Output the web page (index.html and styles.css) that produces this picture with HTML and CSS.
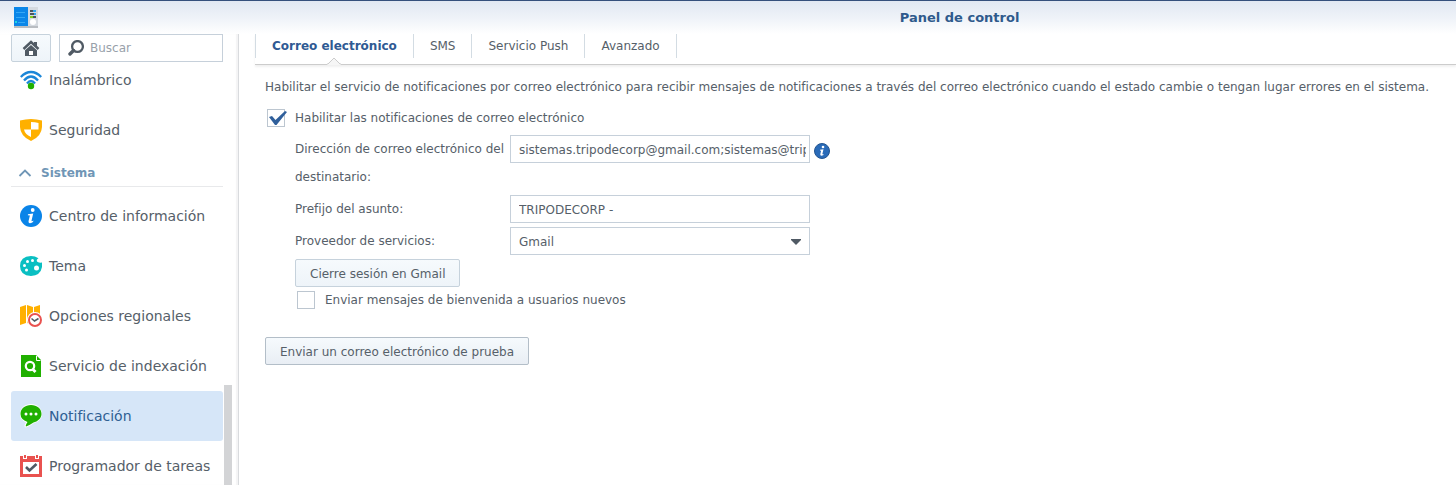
FILE: index.html
```html
<!DOCTYPE html>
<html lang="es">
<head>
<meta charset="utf-8">
<title>Panel de control</title>
<link rel="stylesheet" href="styles.css">
</head>
<body>
<header class="titlebar">
  <svg class="app-icon" width="24" height="22" viewBox="0 0 24 22" aria-hidden="true">
    <rect x="0" y="19" width="24" height="2" fill="#b9bdc2"/>
    <rect x="14" y="0" width="10" height="19" fill="#d5dae0"/>
    <rect x="0" y="0" width="14" height="19" fill="#0a86e8"/>
    <path d="M2 5.500h9M2 10.500h9M4 15.500h7" stroke="#35a8f5" stroke-width="1" fill="none"/>
    <path d="M1 15h2" stroke="#1fd6e0" stroke-width="2"/>
    <path d="M16 4h3M16 7h4M18 10h4" stroke="#4a5560" stroke-width="2"/>
    <path d="M19 4h3M20 7h2" stroke="#2fa5ee" stroke-width="2"/>
    <path d="M16 10h3" stroke="#7fcf1c" stroke-width="2"/>
    <circle cx="19" cy="15" r="3" fill="#fff"/>
  </svg>
  <h1 class="window-title">Panel de control</h1>
</header>
<div class="window-body">
  <aside class="sidebar">
    <div class="toolbar">
      <button class="home-button" type="button" aria-label="Inicio">
        <svg width="18" height="18" viewBox="0 0 18 18" aria-hidden="true">
          <path d="M1.500 10L9 3l7.500 7" fill="none" stroke="#505a64" stroke-width="2.400"/>
          <path d="M12 3h3v5l-3-3z" fill="#505a64"/>
          <path d="M9 6l6 5.300V17H3v-5.700z" fill="#505a64"/>
          <path d="M7 12h4v4H7z" fill="#fff"/>
        </svg>
      </button>
      <label class="search">
        <svg width="16" height="16" viewBox="0 0 16 16" aria-hidden="true">
          <circle cx="9.500" cy="6.500" r="5.400" fill="none" stroke="#505a64" stroke-width="2.300"/>
          <path d="M5.500 10.500L2 14" stroke="#505a64" stroke-width="3.400" stroke-linecap="round"/>
        </svg>
        <input class="search-input" type="text" placeholder="Buscar" aria-label="Buscar">
      </label>
    </div>
    <nav class="side-list">
      <a class="side-item" href="#">
        <svg width="22" height="22" viewBox="0 0 22 22" aria-hidden="true">
          <g fill="none" stroke="#1b86d8" stroke-width="2.300">
            <path d="M.8 8Q5.500 3 11 3T21.200 8"/>
            <path d="M4 11.500Q7.500 7.500 11 7.500T18 11.500"/>
            <path d="M7 14.500Q9 12 11 12T15 14.500"/>
          </g>
          <circle cx="11" cy="17" r="3.200" fill="#20b000"/>
        </svg>
        Inalámbrico
      </a>
      <a class="side-item" href="#">
        <svg width="22" height="22" viewBox="0 0 22 22" aria-hidden="true">
          <path d="M0 1.500Q11-1.500 22 1.500V8Q21.500 17.500 11 22Q.5 17.500 0 8z" fill="#ffb000"/>
          <path d="M11 3Q15 3 18.500 4V10.500H11zM4 10.500H11V18Q5 15.500 4 10.500z" fill="#fff"/>
        </svg>
        Seguridad
      </a>
      <button class="side-group" type="button">
        <svg width="14" height="8" viewBox="0 0 14 8" aria-hidden="true">
          <path d="M1.500 7L7 1.500 12.500 7" fill="none" stroke="#7096b6" stroke-width="1.800"/>
        </svg>
        Sistema
      </button>
      <a class="side-item" href="#">
        <svg width="22" height="22" viewBox="0 0 22 22" aria-hidden="true">
          <circle cx="11" cy="11" r="11" fill="#0a84e8"/>
          <circle cx="12.700" cy="5" r="1.900" fill="#fff"/>
          <path d="M8 9.200L13.200 8.400 11.500 15.800Q11.600 16.700 13.500 15.600L13 17Q8.300 19.800 8.500 16.300L9.900 10.400 7.800 10.200z" fill="#fff"/>
        </svg>
        Centro de información
      </a>
      <a class="side-item" href="#">
        <svg width="22" height="20" viewBox="0 0 22 20" aria-hidden="true">
          <path d="M11 0Q15 0 18.500 2.200Q16 3.500 17 5.500Q18 7 22 6.500V11Q20.500 19.500 11 20Q0 19.500 0 10Q0 .5 11 0z" fill="#0abfc2"/>
          <g fill="#fff">
            <circle cx="7.500" cy="5.500" r="1.500"/><circle cx="12.500" cy="4.500" r="1.500"/>
            <circle cx="4.500" cy="9.500" r="1.500"/><circle cx="6.500" cy="14" r="1.500"/>
            <circle cx="16.500" cy="12" r="2.500"/>
          </g>
        </svg>
        Tema
      </a>
      <a class="side-item" href="#">
        <svg width="22" height="22" viewBox="0 0 22 22" aria-hidden="true">
          <path d="M0 2L6 0V18L0 20zM7 0L13 2V20L7 18zM14 2L20 0V18L14 20z" fill="#ffb000"/>
          <circle cx="15" cy="15" r="8" fill="#fff"/>
          <circle cx="15" cy="15" r="6" fill="#fff" stroke="#e9524f" stroke-width="2"/>
          <path d="M11.500 13.500L14.500 16 18.500 13.500" fill="none" stroke="#505a64" stroke-width="1.500"/>
        </svg>
        Opciones regionales
      </a>
      <a class="side-item" href="#">
        <svg width="22" height="22" viewBox="0 0 22 22" aria-hidden="true">
          <path d="M1 0H16L21 5V22H1z" fill="#20b000"/>
          <path d="M16.500 1v4.500h4" fill="none" stroke="#fff" stroke-width="1"/>
          <circle cx="10" cy="11" r="4.200" fill="none" stroke="#fff" stroke-width="2.200"/>
          <path d="M12.500 14l3 3" stroke="#fff" stroke-width="2.800"/>
        </svg>
        Servicio de indexación
      </a>
      <a class="side-item side-item-active" href="#" aria-current="page">
        <svg width="22" height="24" viewBox="0 0 22 24" aria-hidden="true">
          <path d="M11 0C17 0 22 4 22 10C22 15 18 18 14 19Q10 22 6 23.500Q3 23 6 18.500Q0 15.500 0 10C0 4 5 0 11 0z" fill="#fff"/>
          <path d="M11 1C17 1 21.500 4.500 21.500 10C21.500 14.500 17.500 17.500 13.500 18.500Q10 21 6 22.500Q5 22 7.500 18Q.5 15.500 .5 10C.5 4.500 5 1 11 1z" fill="#20b000"/>
          <g fill="#fff"><circle cx="6" cy="10" r="1.500"/><circle cx="11" cy="10" r="1.500"/><circle cx="16" cy="10" r="1.500"/></g>
        </svg>
        Notificación
      </a>
      <a class="side-item" href="#">
        <svg width="22" height="22" viewBox="0 0 22 22" aria-hidden="true">
          <path d="M0 1H22V22H0z" fill="#e9524f"/>
          <path d="M3 7H19V19H3z" fill="#fff"/>
          <path d="M5 0v4M17 0v4" stroke="#fff" stroke-width="4"/>
          <path d="M5 0v3M17 0v3" stroke="#e9524f" stroke-width="2"/>
          <path d="M6 12l3.500 3.500L16.500 9" fill="none" stroke="#505a64" stroke-width="2.600"/>
        </svg>
        Programador de tareas
      </a>
      <div class="scroll-thumb"></div>
    </nav>
  </aside>
  <main class="content">
    <nav class="tabs">
      <a class="tab tab-active" href="#" aria-current="page">Correo electrónico
        <svg class="tab-notch" width="14" height="8" viewBox="0 0 14 8" aria-hidden="true">
          <path d="M0 8V7L7 1l7 6v1z" fill="#f6f6f6"/>
          <path d="M0 7h1L7 1l6 6h1" fill="none" stroke="#ccc"/>
        </svg>
      </a>
      <a class="tab" href="#">SMS</a>
      <a class="tab" href="#">Servicio Push</a>
      <a class="tab" href="#">Avanzado</a>
    </nav>
    <form class="panel">
      <p class="intro">Habilitar el servicio de notificaciones por correo electrónico para recibir mensajes de notificaciones a través del correo electrónico cuando el estado cambie o tengan lugar errores en el sistema.</p>
      <label class="check-row">
        <input class="check" type="checkbox" checked>
        <svg class="check-mark" width="18" height="14" viewBox="0 0 18 14" aria-hidden="true">
          <path d="M0 6l3-1 3.500 4L16 0l2 1L7.500 14H6z" fill="#2f5f9b"/>
        </svg>
        Habilitar las notificaciones de correo electrónico
      </label>
      <div class="fields">
        <div class="field">
          <label class="field-label" for="recipient">Dirección de correo electrónico del destinatario:</label>
          <input class="control" id="recipient" type="text" value="sistemas.tripodecorp@gmail.com;sistemas@tripodecorp.com">
          <svg class="info" width="16" height="16" viewBox="0 0 16 16" aria-hidden="true">
            <circle cx="8" cy="8" r="7.500" fill="#2a6bb8" stroke="#245590"/>
            <circle cx="9" cy="4" r="1.300" fill="#fff"/>
            <path d="M6 6.800L9.500 6.200 8.300 11.300 9.600 11 9.200 12.200Q6 13.500 6.300 11.300L7.100 7.700 6 7.500z" fill="#fff"/>
          </svg>
        </div>
        <div class="field">
          <label class="field-label" for="prefix">Prefijo del asunto:</label>
          <input class="control" id="prefix" type="text" value="TRIPODECORP -">
        </div>
        <div class="field">
          <label class="field-label" for="provider">Proveedor de servicios:</label>
          <div class="select-box">
            <select class="control select" id="provider"><option>Gmail</option></select>
            <svg class="arrow" width="10" height="6" viewBox="0 0 10 6" aria-hidden="true">
              <path d="M0 0h10v1L5 6 0 1z" fill="#505a64"/>
            </svg>
          </div>
        </div>
        <button class="button button-soft" type="button">Cierre sesión en Gmail</button>
        <label class="check-row">
          <input class="check" type="checkbox">
          Enviar mensajes de bienvenida a usuarios nuevos
        </label>
      </div>
      <button class="button button-test" type="button">Enviar un correo electrónico de prueba</button>
    </form>
  </main>
</div>
</body>
</html>
```

FILE: styles.css
```css
* { box-sizing: border-box; }

body {
  margin: 0;
  height: 100vh;
  overflow: hidden;
  display: flex;
  flex-direction: column;
  background: #fff;
  color: #566069;
  font: 12px/28px Verdana, "DejaVu Sans", sans-serif;
}

button, input, select { font: inherit; color: inherit; }
a { color: inherit; text-decoration: none; }
svg { flex: none; }

.titlebar {
  display: grid;
  grid-template-columns: 618fr 382fr;
  align-items: center;
  height: 34px;
  border-top: 1px solid #35507c;
  background: linear-gradient(#e1e8f2, #eef2f8 50%, #fff);
}
.app-icon { margin-left: 14px; }
.window-title {
  margin: 0;
  font-size: 13px;
  font-weight: bold;
  color: #2f5a8c;
}

.window-body { flex: 1; min-height: 0; display: flex; }

.sidebar {
  flex: none;
  width: 239px;
  display: flex;
  flex-direction: column;
  border-right: 1px solid #d9dbde;
  box-shadow: inset -2px 0 1px #f4f4f5;
}
.toolbar { display: flex; gap: 8px; padding: 0 15px 0 11px; }
.home-button {
  width: 40px;
  height: 28px;
  padding: 0;
  display: flex;
  align-items: center;
  justify-content: center;
  border: 1px solid #c6d2dc;
  border-radius: 2px;
  background: linear-gradient(#f6fafd, #eef4f9);
}
.search {
  flex: 1;
  min-width: 0;
  height: 28px;
  padding-left: 8px;
  display: flex;
  align-items: center;
  gap: 6px;
  border: 1px solid #c6d0da;
}
.search-input {
  flex: 1;
  min-width: 0;
  height: 26px;
  padding: 0;
  border: 0;
  outline: 0;
  background: none;
}
.search-input::placeholder { color: #98a1aa; opacity: 1; }

.side-list {
  position: relative;
  flex: 1;
  min-height: 0;
  overflow: hidden;
  padding: 0 15px 0 11px;
}
.side-item {
  display: flex;
  align-items: center;
  gap: 7px;
  height: 50px;
  padding-left: 9px;
  border-radius: 3px;
  font-size: 14px;
  white-space: nowrap;
}
/* The list is scrolled a little past the top of its first row. */
.side-item:first-child { margin-top: -7px; }
.side-item-active { background: #d6e6f8; color: #2f5f93; }
.side-group {
  width: 100%;
  height: 32px;
  margin-bottom: 4px;
  padding: 4px 7px 0;
  display: flex;
  align-items: center;
  gap: 9px;
  border: 0;
  border-bottom: 1px solid #e8e9eb;
  background: none;
  color: #7096b6;
  font-weight: bold;
}
.scroll-thumb {
  position: absolute;
  right: 6px;
  top: 323px;
  bottom: 0;
  width: 8px;
  background: #d3d4d6;
}

.content { flex: 1; min-width: 0; padding-left: 16px; }
.tabs {
  display: flex;
  height: 31px;
  border-bottom: 1px solid #ccc;
  box-shadow: 0 2px 2px #f1f1f1;
}
.tab {
  height: 24px;
  padding: 0 16px;
  border-right: 1px solid #d3dce3;
  line-height: 24px;
}
.tab-active {
  position: relative;
  border-left: 1px solid #d3dce3;
  color: #2f5a93;
  font-weight: bold;
}
.tab-notch { position: absolute; left: calc(50% - 7px); top: 23px; }

.panel {
  display: flex;
  flex-direction: column;
  align-items: flex-start;
  padding: 8px 10px;
}
.intro { margin: 0 0 3px; white-space: nowrap; }
.check-row {
  position: relative;
  display: flex;
  align-items: center;
  gap: 10px;
  padding-left: 2px;
}
.check {
  appearance: none;
  width: 18px;
  height: 18px;
  margin: 0;
  border: 1px solid #bcc6d0;
  background: #fff;
}
.check-mark { position: absolute; left: 4px; top: 7px; }
.fields {
  display: flex;
  flex-direction: column;
  align-items: flex-start;
  gap: 4px;
  padding-left: 30px;
  margin-top: 3px;
}
.field { display: flex; align-items: flex-start; }
.field-label { width: 215px; }
.control {
  width: 300px;
  height: 28px;
  padding: 2px 3px 0 8px;
  border: 1px solid #c6d0da;
  border-radius: 0;
  background: #fff;
}
.info { margin: 8px 0 0 4px; }
.select-box { position: relative; display: flex; }
.select { appearance: none; padding: 0 20px 2px 8px; }
.arrow { position: absolute; right: 9px; top: 12px; pointer-events: none; }
.button {
  height: 28px;
  padding: 2px 14px 0;
  border: 1px solid #b3bec8;
  border-radius: 2px;
  background: linear-gradient(#f6fafd, #e9eef4);
  line-height: 24px;
}
.button-soft { border-color: #c6d2dc; background: linear-gradient(#f6fafd, #eef4f9); }
.fields .check-row { height: 18px; }
.button-test { margin-top: 28px; }
```
